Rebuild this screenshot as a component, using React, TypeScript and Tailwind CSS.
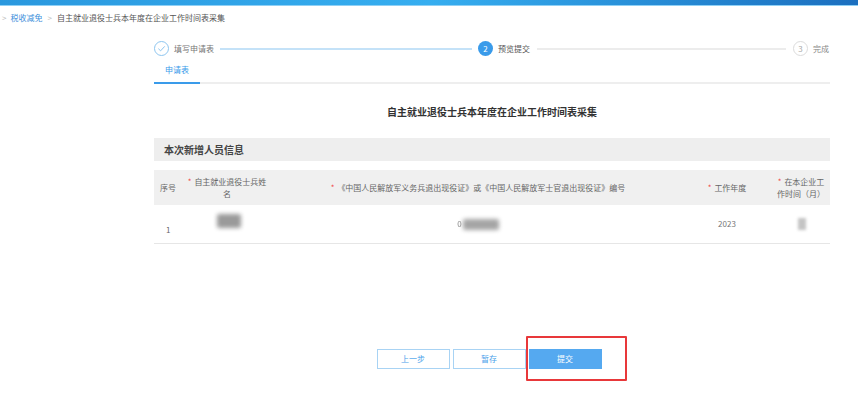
import React from "react";

const font = { fontFamily: "'Noto Sans CJK SC', 'Noto Sans', sans-serif" };

function Star() {
  return <span className="text-[#f04848] mr-[3px]">*</span>;
}

export default function App() {
  return (
    <div className="w-[858px] h-[396px] bg-white overflow-hidden text-[#555]" style={font}>
      <div className="h-[5px] bg-gradient-to-r from-[#2a98de] via-[#36aef0] to-[#1c6fbf]" />
      <div className="h-[1px] bg-[#8fd0f5]" />
      {/* breadcrumb */}
      <div className="h-[24px] flex items-center pl-[2px] text-[8px] leading-none">
        <span className="text-[#bbb] mr-[4px]">&gt;</span>
        <span className="text-[#3d8fdb]">税收减免</span>
        <span className="text-[#bbb] mx-[5px]">&gt;</span>
        <span className="text-[#555]">自主就业退役士兵本年度在企业工作时间表采集</span>
      </div>
      <div className="ml-[154px] w-[676px]">
        {/* steps */}
        <div className="h-[34px] pt-[11px] flex items-start">
          <div className="flex items-center h-[15px] w-full">
            <div className="w-[15px] h-[15px] rounded-full border border-[#8ec6f0] flex items-center justify-center shrink-0">
              <svg width="9" height="9" viewBox="0 0 10 10" fill="none">
                <path d="M1.5 5.2 L4 7.6 L8.6 2.6" stroke="#7fbdec" strokeWidth="1" />
              </svg>
            </div>
            <span className="ml-[5px] text-[8px] text-[#777] leading-none shrink-0">填写申请表</span>
            <div className="mx-[6px] h-[2px] bg-[#c4e2f8] w-[252px]" />
            <div className="w-[15px] h-[15px] rounded-full bg-[#3a9bea] flex items-center justify-center shrink-0 text-white text-[8px] leading-none">2</div>
            <span className="ml-[5px] text-[8px] text-[#555] leading-none shrink-0">预览提交</span>
            <div className="mx-[7px] h-[2px] bg-[#ececec] w-[249px]" />
            <div className="w-[15px] h-[15px] rounded-full border border-[#dcdcdc] flex items-center justify-center shrink-0 text-[#aaa] text-[8px] leading-none">3</div>
            <span className="ml-[5px] text-[8px] text-[#888] leading-none shrink-0">完成</span>
          </div>
        </div>
        {/* tab */}
        <div className="border-b-2 border-[#eeeeee] h-[20px] relative">
          <div className="w-[46px] h-[20px] flex items-start justify-center pt-[2px] text-[8px] text-[#3a9bea] leading-none border-b-2 border-[#3a9bea]">
            申请表
          </div>
        </div>
        {/* title */}
        <div className="h-[54px] flex items-center justify-center text-[10px] font-bold text-[#333]">
          自主就业退役士兵本年度在企业工作时间表采集
        </div>
        {/* section header */}
        <div className="h-[23px] bg-[#eeeeee] flex items-center pl-[10px] text-[10px] font-bold text-[#444]">
          本次新增人员信息
        </div>
        {/* table */}
        <div className="mt-[9px] text-[8px] text-[#666]">
          <div className="h-[35px] bg-[#f0f0f0] flex items-center leading-[12px]">
            <div className="w-[26px] pl-[6px]">序号</div>
            <div className="w-[94px] px-[6px] text-center">
              <Star />自主就业退役士兵姓名
            </div>
            <div className="w-[408px] text-center">
              <Star />《中国人民解放军义务兵退出现役证》或《中国人民解放军士官退出现役证》编号
            </div>
            <div className="w-[90px] text-center">
              <Star />工作年度
            </div>
            <div className="w-[58px] px-[4px] text-center">
              <Star />在本企业工作时间（月）
            </div>
          </div>
          <div className="h-[39px] border-b border-[#e6e6e6] flex items-center">
            <div className="w-[26px] pl-[12px] pt-[12px] text-[#666]">1</div>
            <div className="w-[94px] flex justify-center">
              <div className="w-[24px] h-[14px] mb-[6px] ml-[4px] bg-[#9a9a9a] rounded-[2px] blur-[2px]" />
            </div>
            <div className="w-[408px] flex justify-center items-center">
              <span className="text-[#888] blur-[0.5px]">0</span>
              <div className="w-[36px] h-[11px] bg-[#a5a5a5] rounded-[2px] blur-[2px] ml-[1px]" />
            </div>
            <div className="w-[90px] text-center text-[#777]">2023</div>
            <div className="w-[58px] flex justify-center">
              <div className="w-[8px] h-[12px] bg-[#c4c4c4] blur-[1.5px] ml-[2px]" />
            </div>
          </div>
        </div>
        {/* buttons */}
        <div className="mt-[105px] flex justify-center pr-[6px] gap-[3px] text-[8px]">
          <button className="w-[73px] h-[20px] border border-[#a8d3f4] text-[#4aa1ea] bg-white">上一步</button>
          <button className="w-[73px] h-[20px] border border-[#a8d3f4] text-[#4aa1ea] bg-white">暂存</button>
          <div className="relative">
            <button className="w-[73px] h-[20px] bg-[#55a9f0] text-white">提交</button>
            <div className="absolute left-[-3px] top-[-13px] w-[101px] h-[45px] border-2 border-[#e8383a] rounded-[1px]" />
          </div>
        </div>
      </div>
    </div>
  );
}
